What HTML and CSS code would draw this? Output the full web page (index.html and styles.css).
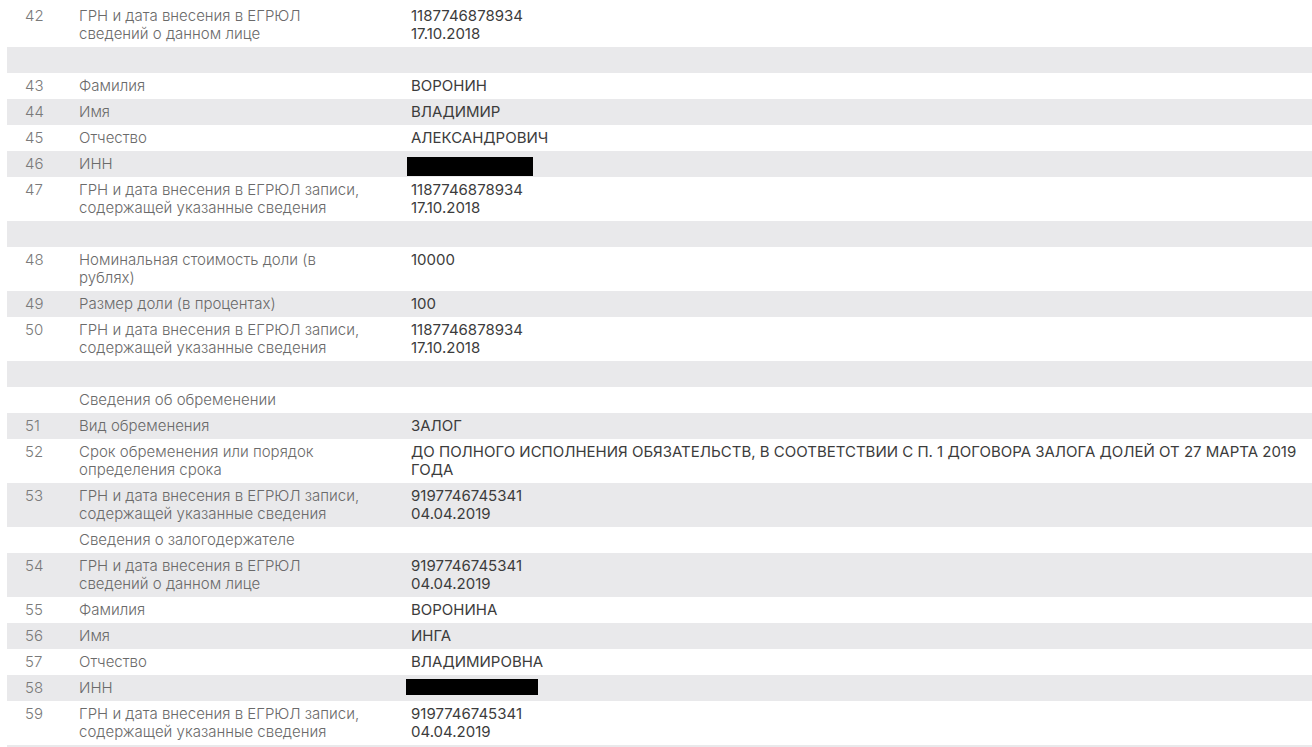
FILE: index.html
```html
<!DOCTYPE html>
<html lang="ru">
<head>
  <meta charset="UTF-8">
  <title>Выписка ЕГРЮЛ</title>
  <link rel="stylesheet" href="styles.css">
</head>
<body>
  <table class="egrul">
    <tr>
      <td class="num">42</td>
      <td class="label">ГРН и дата внесения в ЕГРЮЛ сведений о данном лице</td>
      <td class="value">1187746878934<br>17.10.2018</td>
    </tr>
    <tr class="empty"><td colspan="3">&nbsp;</td></tr>
    <tr><td class="num">43</td><td class="label">Фамилия</td><td class="value">ВОРОНИН</td></tr>
    <tr><td class="num">44</td><td class="label">Имя</td><td class="value">ВЛАДИМИР</td></tr>
    <tr><td class="num">45</td><td class="label">Отчество</td><td class="value">АЛЕКСАНДРОВИЧ</td></tr>
    <tr><td class="num">46</td><td class="label">ИНН</td><td class="value"><span class="hidden-inn"></span></td></tr>
    <tr>
      <td class="num">47</td>
      <td class="label">ГРН и дата внесения в ЕГРЮЛ записи, содержащей указанные сведения</td>
      <td class="value">1187746878934<br>17.10.2018</td>
    </tr>
    <tr class="empty"><td colspan="3">&nbsp;</td></tr>
    <tr><td class="num">48</td><td class="label">Номинальная стоимость доли (в рублях)</td><td class="value">10000</td></tr>
    <tr><td class="num">49</td><td class="label">Размер доли (в процентах)</td><td class="value">100</td></tr>
    <tr>
      <td class="num">50</td>
      <td class="label">ГРН и дата внесения в ЕГРЮЛ записи, содержащей указанные сведения</td>
      <td class="value">1187746878934<br>17.10.2018</td>
    </tr>
    <tr class="empty"><td colspan="3">&nbsp;</td></tr>
    <tr class="section"><td class="num"></td><td class="label" colspan="2">Сведения об обременении</td></tr>
    <tr><td class="num">51</td><td class="label">Вид обременения</td><td class="value">ЗАЛОГ</td></tr>
    <tr>
      <td class="num">52</td>
      <td class="label">Срок обременения или порядок определения срока</td>
      <td class="value">ДО ПОЛНОГО ИСПОЛНЕНИЯ ОБЯЗАТЕЛЬСТВ, В СООТВЕТСТВИИ С П. 1 ДОГОВОРА ЗАЛОГА ДОЛЕЙ ОТ 27 МАРТА 2019 ГОДА</td>
    </tr>
    <tr>
      <td class="num">53</td>
      <td class="label">ГРН и дата внесения в ЕГРЮЛ записи, содержащей указанные сведения</td>
      <td class="value">9197746745341<br>04.04.2019</td>
    </tr>
    <tr class="section"><td class="num"></td><td class="label" colspan="2">Сведения о залогодержателе</td></tr>
    <tr>
      <td class="num">54</td>
      <td class="label">ГРН и дата внесения в ЕГРЮЛ сведений о данном лице</td>
      <td class="value">9197746745341<br>04.04.2019</td>
    </tr>
    <tr><td class="num">55</td><td class="label">Фамилия</td><td class="value">ВОРОНИНА</td></tr>
    <tr><td class="num">56</td><td class="label">Имя</td><td class="value">ИНГА</td></tr>
    <tr><td class="num">57</td><td class="label">Отчество</td><td class="value">ВЛАДИМИРОВНА</td></tr>
    <tr><td class="num">58</td><td class="label">ИНН</td><td class="value"><span class="hidden-inn wide"></span></td></tr>
    <tr>
      <td class="num">59</td>
      <td class="label">ГРН и дата внесения в ЕГРЮЛ записи, содержащей указанные сведения</td>
      <td class="value">9197746745341<br>04.04.2019</td>
    </tr>
    <tr class="empty"><td colspan="3">&nbsp;</td></tr>
  </table>
</body>
</html>
```

FILE: styles.css
```css
body {
  margin: 3px 0 0 7px;
  font-family: Inter, "Liberation Sans", sans-serif;
  font-size: 15px;
  background: #fff;
  overflow: hidden;
}

.egrul {
  width: 100%;
  border-collapse: collapse;
}

.egrul tr:nth-child(even) { background: #e9e9eb; }

.egrul td {
  padding: 4px 0;
  line-height: 18px;
  vertical-align: top;
}

.num {
  width: 54px;
  padding-left: 18px !important;
  color: #7a7a7a;
  font-weight: 300;
}

.label {
  width: 288px;
  padding-right: 44px !important;
  color: #6a6a6a;
  font-weight: 300;
}

.value {
  color: #3c3c3c;
  padding-right: 8px !important;
}

.hidden-inn {
  display: inline-block;
  width: 126px;
  height: 19px;
  margin: 2px 0 -3px -4px;
  background: #000;
  vertical-align: top;
}

.hidden-inn.wide {
  width: 132px;
  height: 16px;
  margin-top: 0;
  margin-left: -5px;
}
```
